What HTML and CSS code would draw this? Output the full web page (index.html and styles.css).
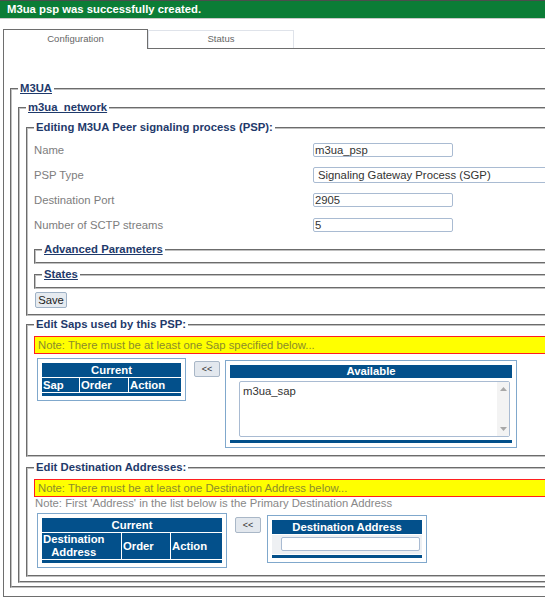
FILE: index.html
```html
<!DOCTYPE html>
<html>
<head>
<meta charset="utf-8">
<link rel="stylesheet" href="styles.css">
</head>
<body>
<div class="banner">M3ua psp was successfully created.</div>
<div class="tabs">
  <div class="tab tab-active">Configuration</div>
  <div class="tab tab-inactive">Status</div>
</div>
<div class="panel">
  <fieldset class="fs fs-m3ua">
    <legend class="lg"><a class="lg-link">M3UA</a></legend>
    <fieldset class="fs fs-net">
      <legend class="lg"><a class="lg-link">m3ua_network</a></legend>

      <fieldset class="fs fs-edit">
        <legend class="lg">Editing M3UA Peer signaling process (PSP):</legend>
        <div class="form-grid">
          <div class="lbl">Name</div>
          <div><input class="txt" type="text" value="m3ua_psp"></div>
          <div class="lbl">PSP Type</div>
          <div><div class="sel">Signaling Gateway Process (SGP)</div></div>
          <div class="lbl">Destination Port</div>
          <div><input class="txt" type="text" value="2905"></div>
          <div class="lbl">Number of SCTP streams</div>
          <div><input class="txt" type="text" value="5"></div>
        </div>
        <fieldset class="fs fs-sub fs-adv">
          <legend class="lg"><a class="lg-link">Advanced Parameters</a></legend>
        </fieldset>
        <fieldset class="fs fs-sub fs-states">
          <legend class="lg"><a class="lg-link">States</a></legend>
        </fieldset>
        <button class="btn-save">Save</button>
      </fieldset>

      <fieldset class="fs fs-saps">
        <legend class="lg">Edit Saps used by this PSP:</legend>
        <div class="note">Note: There must be at least one Sap specified below...</div>
        <div class="pick pick-saps">
          <div class="pbox pbox-cur">
            <table class="ptab">
              <tr><th colspan="3" class="th-center">Current</th></tr>
              <tr><th class="c-sap">Sap</th><th class="c-order">Order</th><th class="c-action">Action</th></tr>
              <tr><td colspan="3" class="bar"></td></tr>
            </table>
          </div>
          <button class="btn-move">&lt;&lt;</button>
          <div class="pbox pbox-avail">
            <table class="ptab ptab-full">
              <tr><th class="th-center th-avail">Available</th></tr>
              <tr><td class="body-cell body-white body-list">
                <div class="listbox">
                  <div class="lb-items">m3ua_sap</div>
                  <div class="lb-scroll">
                    <svg width="7" height="4" viewBox="0 0 7 4"><path d="M0 4 L3.5 0 L7 4 Z" fill="#a8a8a8"/></svg>
                    <svg width="7" height="4" viewBox="0 0 7 4"><path d="M0 0 L3.5 4 L7 0 Z" fill="#a8a8a8"/></svg>
                  </div>
                </div>
              </td></tr>
              <tr><td class="bar"></td></tr>
            </table>
          </div>
        </div>
      </fieldset>

      <fieldset class="fs fs-dest">
        <legend class="lg">Edit Destination Addresses:</legend>
        <div class="note">Note: There must be at least one Destination Address below...</div>
        <div class="subnote">Note: First 'Address' in the list below is the Primary Destination Address</div>
        <div class="pick pick-dest">
          <div class="pbox pbox-cur">
            <table class="ptab">
              <tr><th colspan="3" class="th-center">Current</th></tr>
              <tr class="row-tall"><th class="c-dest"><span class="two-line">Destination<br>Address</span></th><th class="c-order2">Order</th><th class="c-action2">Action</th></tr>
              <tr><td colspan="3" class="bar"></td></tr>
            </table>
          </div>
          <button class="btn-move btn-move-dest">&lt;&lt;</button>
          <div class="pbox pbox-daddr">
            <table class="ptab ptab-full">
              <tr><th class="th-center">Destination Address</th></tr>
              <tr><td class="body-cell body-gray"><input class="txt txt-addr" type="text" value=""></td></tr>
              <tr><td class="bar"></td></tr>
            </table>
          </div>
        </div>
      </fieldset>

    </fieldset>
  </fieldset>
</div>
</body>
</html>
```
FILE: styles.css
```css
html, body {
  margin: 0;
  padding: 0;
  overflow: hidden;
  background: #ffffff;
}
body {
  font-family: "Liberation Sans", Arial, sans-serif;
  font-size: 11.3px;
  color: #333;
  width: 720px;
}
.banner {
  background: #0b7d36;
  color: #ffffff;
  font-weight: bold;
  border-top: 1px solid #4d4d4d;
  border-bottom: 1px solid #c9c9c9;
  height: 17px;
  line-height: 17px;
  padding-left: 7px;
}
.tabs {
  display: flex;
  margin: 10px 0 0 3px;
  align-items: flex-start;
}
.tab {
  box-sizing: border-box;
  font-size: 9.5px;
  color: #666;
  text-align: center;
}
.tab-active {
  width: 145px;
  height: 20px;
  line-height: 17px;
  border: 1px solid #6e6e6e;
  border-bottom: none;
  background: #fff;
  margin-bottom: -1px;
  position: relative;
  z-index: 1;
}
.tab-inactive {
  width: 146px;
  height: 18px;
  line-height: 16px;
  margin-top: 1px;
  border: 1px solid #dfe3ea;
  border-bottom: none;
}
.panel {
  border: 1px solid #6e6e6e;
  margin-left: 3px;
  padding: 33px 0 8px 6px;
}
.fs {
  margin: 0;
  border: 2px groove #c0c0c0;
  padding: 0 0 0 6px;
  min-width: 0;
}
.lg {
  padding: 0 2px;
  line-height: 13px;
  font-weight: bold;
  color: #1f3a6b;
}
.lg-link {
  color: #1f3a6b;
  text-decoration: underline;
}
.fs-m3ua { padding-top: 6px; padding-bottom: 3px; }
.fs-net { padding-top: 7px; padding-bottom: 4px; }
.fs-edit { padding-top: 3px; padding-bottom: 6px; }
.fs-saps { margin-top: 2.5px; padding-top: 4.5px; padding-bottom: 7px; }
.fs-dest { margin-top: 4.5px; padding-top: 4.5px; padding-bottom: 7px; }
.fs-sub { padding-bottom: 6px; }
.fs-adv { margin-top: 6px; }
.fs-states { margin-top: 4px; }

.form-grid {
  display: grid;
  grid-template-columns: 279px auto;
  grid-auto-rows: 25px;
  align-items: center;
}
.lbl {
  color: #7d7d7d;
}
.txt {
  box-sizing: border-box;
  width: 140px;
  height: 14px;
  border: 1px solid #a9bbd2;
  border-radius: 2px;
  padding: 0 0 0 1px;
  margin: 0;
  font-family: "Liberation Sans", Arial, sans-serif;
  font-size: 11.3px;
  color: #333;
  display: block;
}
.sel {
  box-sizing: border-box;
  width: 280px;
  height: 16px;
  line-height: 14px;
  border: 1px solid #a9bbd2;
  border-radius: 2px;
  padding-left: 4px;
  color: #333;
}
.btn-save {
  display: block;
  box-sizing: border-box;
  margin: 2.5px 0 0 1px;
  width: 32px;
  height: 16px;
  padding: 0;
  font-family: "Liberation Sans", Arial, sans-serif;
  font-size: 11.3px;
  color: #222;
  background: #e6ebf0;
  border: 1px solid #9fb2c6;
  border-radius: 2px;
}
.note {
  border: 1px solid #ff1f1f;
  background: #ffff00;
  color: #8c8c2a;
  height: 16px;
  line-height: 16px;
  padding-left: 3px;
}
.subnote {
  color: #888;
  line-height: 13px;
  padding-left: 1px;
}
.pick {
  display: flex;
  align-items: flex-start;
  margin-left: 3px;
}
.pick-saps { margin-top: 4px; }
.pick-dest { margin-top: 3.5px; }
.pbox {
  border: 1px solid #80a8cc;
  padding: 3px;
  background: #fff;
}
.ptab {
  border-collapse: separate;
  border-spacing: 1px;
}
.ptab th {
  background: #03508b;
  color: #fff;
  font-weight: bold;
  font-size: 11.3px;
  text-align: left;
  padding: 0 1px;
  height: 14px;
  line-height: 14px;
}
.ptab .th-center { text-align: center; }
.ptab .th-avail { height: 13px; line-height: 13px; }
.ptab td.bar {
  background: #03508b;
  height: 3px;
  padding: 0;
}
.c-sap { width: 35px; }
.c-order { width: 46px; }
.c-action { width: 50px; }
.c-dest { width: 77px; }
.c-order2 { width: 46px; }
.c-action2 { width: 49px; }
.row-tall th { height: 26px; }
.two-line {
  display: inline-block;
  text-align: center;
  line-height: 13px;
}
.btn-move {
  box-sizing: border-box;
  margin: 3px 0 0 8px;
  width: 26px;
  height: 16px;
  padding: 0;
  background: #e3e8ee;
  border: 1px solid #a9b7c7;
  border-radius: 2px;
  font-family: "Liberation Sans", Arial, sans-serif;
  font-size: 9px;
  color: #333;
  line-height: 12px;
}
.btn-move-dest { margin-top: 4px; }
.pbox-avail { margin: 2px 0 0 5px; }
.pbox-daddr { margin: 2px 0 0 6px; }
.ptab-full th { width: 280px; }
.pbox-daddr .ptab-full th { width: 148px; }
.body-cell {
  padding: 2px 2px 3px 9px;
}
.body-list { padding-bottom: 2px; }
.body-white { background: #fff; }
.body-gray { background: #eef0f3; }
.listbox {
  box-sizing: border-box;
  display: flex;
  height: 56px;
  border: 1px solid #a9bbd2;
  border-radius: 2px;
  background: #fff;
}
.lb-items {
  flex: 1;
  padding: 3px 0 0 3px;
  color: #333;
}
.lb-scroll {
  width: 12px;
  background: #f3f3f3;
  display: flex;
  flex-direction: column;
  justify-content: space-between;
  align-items: center;
  padding: 5px 0 5px;
}
.lb-scroll svg { display: block; }
.txt-addr { width: 139px; }
```
